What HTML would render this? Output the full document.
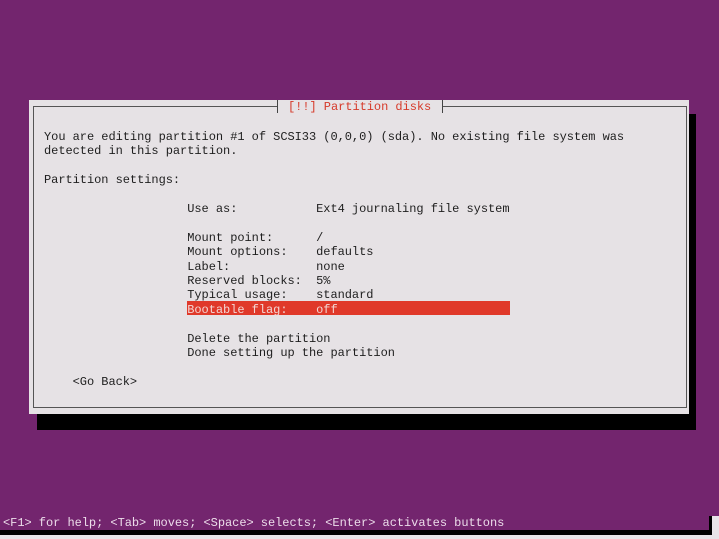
<!DOCTYPE html>
<html><head><meta charset="utf-8"><style>
html,body{margin:0;padding:0;width:719px;height:539px;overflow:hidden;background:#e8e4e8;}
#scr{position:absolute;left:0;top:0;width:719px;height:531px;background:#73256e;}
#bl{position:absolute;left:0;top:530px;width:712px;height:5px;background:#000;}
#br{position:absolute;left:709px;top:516px;width:3px;height:18px;background:#000;}
#rw{position:absolute;left:712px;top:516px;width:7px;height:23px;background:#e8e4e8;}
.t{position:absolute;margin:0;font-family:"Liberation Mono","DejaVu Sans Mono",monospace;font-size:12px;line-height:14.4px;white-space:pre;letter-spacing:-0.04px;}
#shadow{position:absolute;left:37px;top:414px;width:659px;height:16px;background:#000;}
#shadow2{position:absolute;left:689px;top:114px;width:7px;height:316px;background:#000;}
#box{position:absolute;left:29px;top:100px;width:660px;height:314px;background:#e6e2e5;}
#frame{position:absolute;left:33px;top:106px;width:652px;height:300px;border:1px solid #555;}
#frame2{position:absolute;left:34px;top:107px;width:652px;height:300px;border-right:1px solid #fff;border-bottom:1px solid #fff;}
#tgap{position:absolute;left:277px;top:100px;width:166px;height:12px;background:#e6e2e5;}
.tick{position:absolute;top:100px;width:1px;height:13px;background:#444;}
#hl{position:absolute;left:187px;top:301px;width:323px;height:14px;background:#e0392a;}
</style></head><body>
<div id="scr"></div>
<div id="bl"></div><div id="br"></div><div id="rw"></div>
<div id="shadow"></div><div id="shadow2"></div>
<div id="box"></div>
<div id="frame2"></div>
<div id="frame"></div>
<div id="tgap"></div>
<div class="tick" style="left:277px"></div>
<div class="tick" style="left:442px"></div>
<div class="t" style="left:288px;top:100px;color:#d63a2a">[!!] Partition disks</div>
<div id="hl"></div>
<div class="t" style="left:44px;top:130px;color:#1e1e1e">You are editing partition #1 of SCSI33 (0,0,0) (sda). No existing file system was
detected in this partition.

Partition settings:

                    Use as:           Ext4 journaling file system

                    Mount point:      /
                    Mount options:    defaults
                    Label:            none
                    Reserved blocks:  5%
                    Typical usage:    standard
<span style="color:#f3d6d3">                    Bootable flag:    off</span>

                    Delete the partition
                    Done setting up the partition

    &lt;Go Back&gt;</div>
<div class="t" style="left:3px;top:516px;color:#ecdcea">&lt;F1&gt; for help; &lt;Tab&gt; moves; &lt;Space&gt; selects; &lt;Enter&gt; activates buttons</div>
</body></html>
